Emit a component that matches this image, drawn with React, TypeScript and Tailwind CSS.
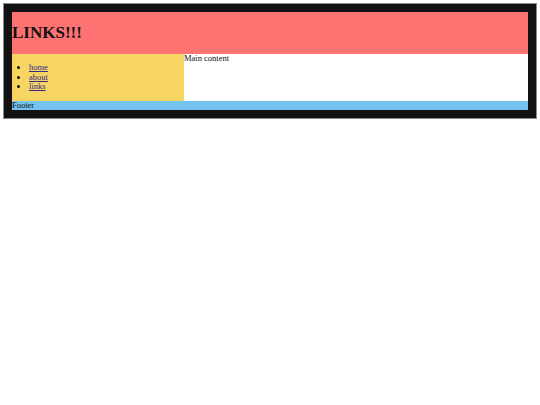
export default function App() {
  return (
    <div className="p-[3px] bg-white min-h-[405px]" style={{ fontFamily: '"Liberation Serif", "Times New Roman", serif' }}>
      <div className="border border-[#8a8a8a]">
        <div className="border-8 border-[#121212] text-[8.5px] leading-[1.15] text-[#111]">
          <div className="bg-[#fe7272]">
            <h1 className="text-[17px] font-bold leading-[1.15] py-[11.4px]">LINKS!!!</h1>
          </div>
          <div className="grid grid-cols-[1fr_2fr] bg-white">
            <div className="bg-[#f6d562]">
              <ul className="list-disc pl-[17px] my-[8.5px]">
                <li><a href="#" className="underline text-[#33288c]">home</a></li>
                <li><a href="#" className="underline text-[#33288c]">about</a></li>
                <li><a href="#" className="underline text-[#33288c]">links</a></li>
              </ul>
            </div>
            <div>Main content</div>
          </div>
          <div className="bg-[#74c3ee]">Footer</div>
        </div>
      </div>
    </div>
  );
}
